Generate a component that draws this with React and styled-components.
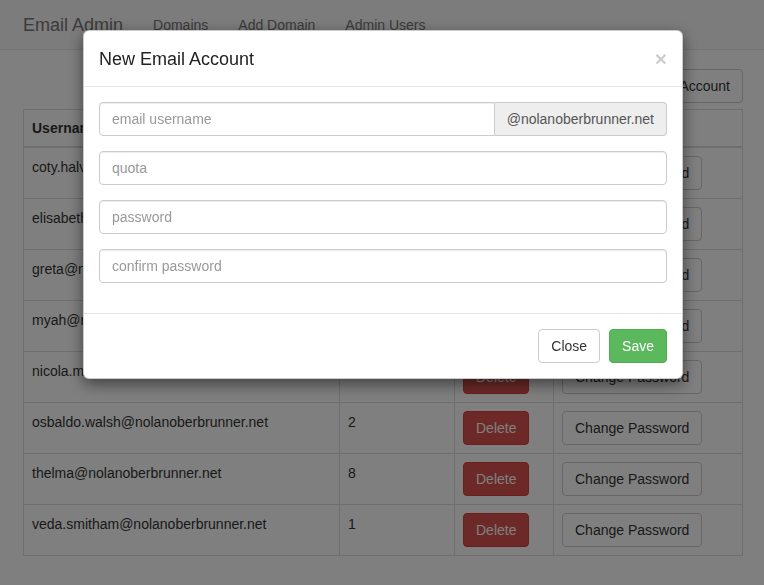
import React from "react";
import styled, { createGlobalStyle } from "styled-components";

const Global = createGlobalStyle`
  * { box-sizing: border-box; }
  html, body { margin: 0; padding: 0; background: #fff; }
  body {
    font-family: "Liberation Sans", Arial, Helvetica, sans-serif;
    font-size: 14px;
    line-height: 1.42857;
    color: #333;
  }
`;

const Navbar = styled.nav`
  height: 50px;
  background: #f8f8f8;
  border-bottom: 1px solid #e7e7e7;
  margin-bottom: 19px;
`;

const Container = styled.div`
  width: 750px;
  margin: 0 auto;
  padding: 0 14px 0 16px;
`;

const NavInner = styled(Container)`
  display: flex;
  align-items: center;
  height: 49px;
`;

const Brand = styled.a`
  font-size: 18px;
  line-height: 20px;
  color: #777;
  padding: 15px 15px 15px 0;
  text-decoration: none;
`;

const NavLink = styled.a`
  color: #777;
  padding: 15px;
  line-height: 20px;
  text-decoration: none;
`;

const Toolbar = styled.div`
  display: flex;
  justify-content: flex-end;
  margin-bottom: 6px;
`;

const Btn = styled.button`
  font-family: inherit;
  font-size: 14px;
  line-height: 20px;
  padding: 6px 12px;
  border-radius: 4px;
  border: 1px solid ${(p) => (p.$variant === "danger" ? "#d43f3a" : p.$variant === "success" ? "#4cae4c" : "#ccc")};
  background: ${(p) => (p.$variant === "danger" ? "#d9534f" : p.$variant === "success" ? "#5cb85c" : "#fff")};
  color: ${(p) => (p.$variant ? "#fff" : "#333")};
  cursor: pointer;
  white-space: nowrap;
`;

const Table = styled.table`
  width: 720px;
  border-collapse: collapse;
  border: 1px solid #ddd;
`;

const Th = styled.th`
  text-align: left;
  padding: 8px;
  border: 1px solid #ddd;
  border-bottom-width: 2px;
  line-height: 20px;
  font-weight: bold;
  width: ${(p) => p.$w}px;
`;

const Td = styled.td`
  padding: 9px 8px 8px;
  border: 1px solid #ddd;
  vertical-align: top;
  line-height: 20px;
`;

const ButtonTd = styled(Td)`
  padding: 8px;
`;

const Backdrop = styled.div`
  position: fixed;
  inset: 0;
  background: rgba(0, 0, 0, 0.5);
`;

const ModalLayer = styled.div`
  position: fixed;
  inset: 0;
  padding: 30px 0 0 83px;
`;

const ModalContent = styled.div`
  width: 600px;
  background: #fff;
  border: 1px solid rgba(0, 0, 0, 0.2);
  border-radius: 6px;
  box-shadow: 0 5px 15px rgba(0, 0, 0, 0.5);
`;

const ModalHeader = styled.div`
  display: flex;
  justify-content: space-between;
  align-items: flex-start;
  padding: 15px 15px 14px;
  border-bottom: 1px solid #e5e5e5;
`;

const ModalTitle = styled.h4`
  margin: 0;
  font-size: 18px;
  font-weight: 500;
  line-height: 26px;
  color: #222;
`;

const CloseX = styled.button`
  border: 0;
  background: none;
  padding: 0;
  margin-top: 2px;
  font-family: inherit;
  font-size: 21px;
  font-weight: bold;
  line-height: 1;
  color: #000;
  opacity: 0.2;
`;

const ModalBody = styled.div`
  padding: 15px 15px 0;
  display: flex;
  flex-direction: column;
`;

const FormGroup = styled.div`
  display: flex;
  margin-bottom: 15px;
`;

const Input = styled.input`
  flex: 1;
  min-width: 0;
  height: 34px;
  padding: 6px 12px;
  font-family: inherit;
  font-size: 14px;
  line-height: 20px;
  color: #555;
  background: #fff;
  border: 1px solid #ccc;
  border-radius: ${(p) => (p.$grouped ? "4px 0 0 4px" : "4px")};
  box-shadow: inset 0 1px 1px rgba(0, 0, 0, 0.075);
  outline: none;
  &::placeholder { color: #999; }
`;

const Addon = styled.span`
  display: flex;
  align-items: center;
  padding: 7px 12px 5px;
  font-size: 14px;
  color: #555;
  background: #eee;
  border: 1px solid #ccc;
  border-left: 0;
  border-radius: 0 4px 4px 0;
`;

const ModalFooter = styled.div`
  display: flex;
  justify-content: flex-end;
  gap: 9px;
  padding: 15px;
  border-top: 1px solid #e5e5e5;
  margin-top: 15px;
`;

const rows = [
  ["coty.halvorson@nolanoberbrunner.net", "5"],
  ["elisabeth.kuhn@nolanoberbrunner.net", "3"],
  ["greta@nolanoberbrunner.net", "4"],
  ["myah@nolanoberbrunner.net", "6"],
  ["nicola.mertz@nolanoberbrunner.net", "2"],
  ["osbaldo.walsh@nolanoberbrunner.net", "2"],
  ["thelma@nolanoberbrunner.net", "8"],
  ["veda.smitham@nolanoberbrunner.net", "1"],
];

export default function App() {
  return (
    <>
      <Global />
      <Navbar>
        <NavInner>
          <Brand href="#">Email Admin</Brand>
          <NavLink href="#">Domains</NavLink>
          <NavLink href="#">Add Domain</NavLink>
          <NavLink href="#">Admin Users</NavLink>
        </NavInner>
      </Navbar>
      <Container>
        <Toolbar>
          <Btn>New Email Account</Btn>
        </Toolbar>
        <Table>
          <thead>
            <tr>
              <Th $w={316}>Username</Th>
              <Th $w={115}>Quota</Th>
              <Th $w={99}></Th>
              <Th $w={189}></Th>
            </tr>
          </thead>
          <tbody>
            {rows.map(([u, q]) => (
              <tr key={u}>
                <Td>{u}</Td>
                <Td>{q}</Td>
                <ButtonTd>
                  <Btn $variant="danger">Delete</Btn>
                </ButtonTd>
                <ButtonTd>
                  <Btn>Change Password</Btn>
                </ButtonTd>
              </tr>
            ))}
          </tbody>
        </Table>
      </Container>
      <Backdrop />
      <ModalLayer>
        <ModalContent>
          <ModalHeader>
            <ModalTitle>New Email Account</ModalTitle>
            <CloseX>×</CloseX>
          </ModalHeader>
          <ModalBody>
            <FormGroup>
              <Input $grouped placeholder="email username" />
              <Addon>@nolanoberbrunner.net</Addon>
            </FormGroup>
            <FormGroup>
              <Input placeholder="quota" />
            </FormGroup>
            <FormGroup>
              <Input type="password" placeholder="password" />
            </FormGroup>
            <FormGroup>
              <Input type="password" placeholder="confirm password" />
            </FormGroup>
          </ModalBody>
          <ModalFooter>
            <Btn>Close</Btn>
            <Btn $variant="success">Save</Btn>
          </ModalFooter>
        </ModalContent>
      </ModalLayer>
    </>
  );
}
